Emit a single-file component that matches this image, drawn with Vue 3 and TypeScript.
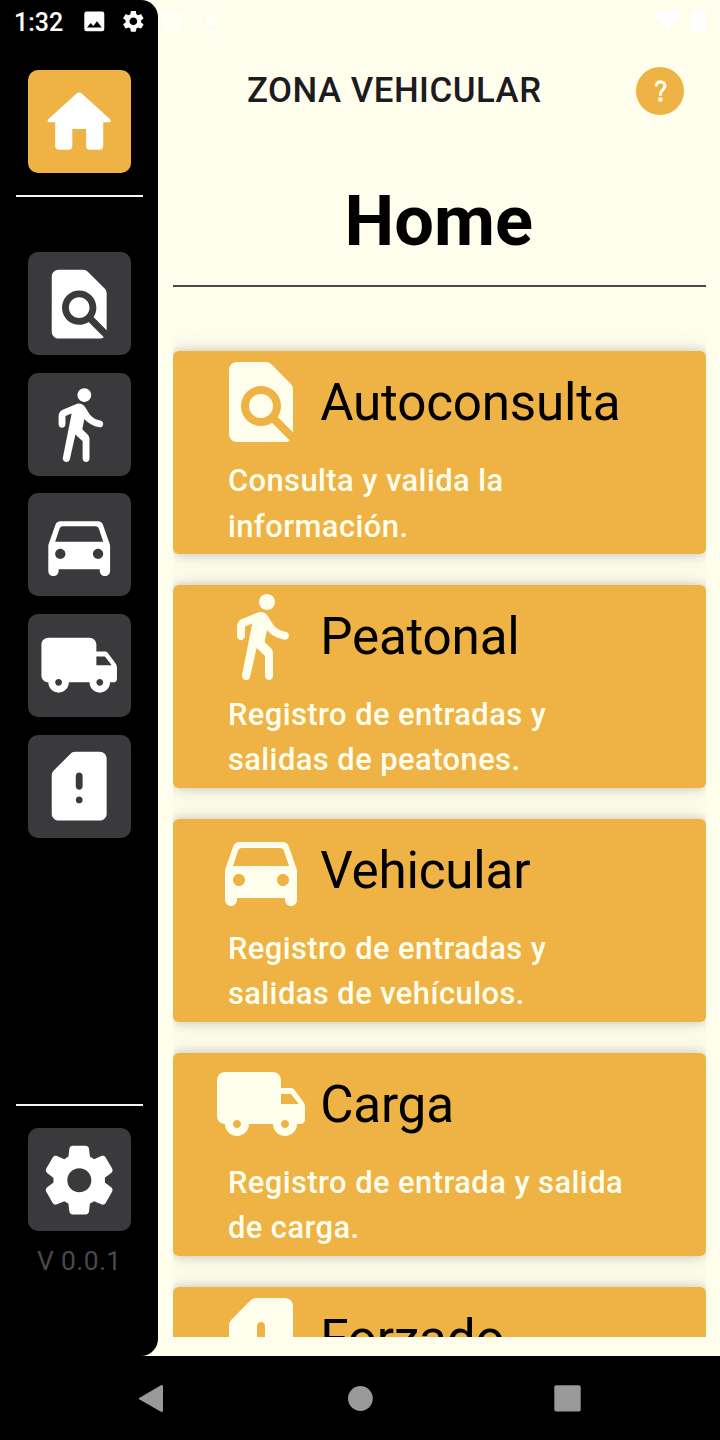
<script setup lang="ts">
interface Entry {
  icon: string
  title: string
  text: string
}

const icons: Record<string, string> = {
  home: 'M10 19v-5h4v5c0 .55.45 1 1 1h3c.55 0 1-.45 1-1v-7h1.7c.46 0 .68-.57.33-.87L12.67 3.6c-.38-.34-.96-.34-1.34 0l-8.36 7.53c-.34.3-.13.87.33.87H5v7c0 .55.45 1 1 1h3c.55 0 1-.45 1-1z',
  search: 'M20 19.59V8.83c0-.53-.21-1.04-.59-1.41l-4.83-4.83c-.37-.38-.88-.59-1.41-.59H6c-1.1 0-1.99.9-1.99 2L4 20c0 1.1.89 2 1.99 2H18c.45 0 .85-.15 1.19-.4l-4.43-4.43c-.8.52-1.74.83-2.76.83-2.76 0-5-2.24-5-5s2.24-5 5-5 5 2.24 5 5c0 1.02-.31 1.96-.83 2.75L20 19.59zM9 13c0 1.66 1.34 3 3 3s3-1.34 3-3-1.34-3-3-3-3 1.34-3 3z',
  walk: 'M13.5 5.5c1.1 0 2-.9 2-2s-.9-2-2-2-2 .9-2 2 .9 2 2 2zM9.8 8.9L7.24 21.81c-.13.61.35 1.19.98 1.19h.08c.47 0 .87-.32.98-.78L10.9 15l2.1 2v5c0 .55.45 1 1 1s1-.45 1-1v-5.64c0-.55-.22-1.07-.62-1.45L12.9 13.5l.6-3c1.07 1.24 2.62 2.13 4.36 2.41.6.09 1.14-.39 1.14-1 0-.49-.36-.9-.84-.98-1.53-.25-2.8-1.16-3.46-2.33l-1-1.6c-.56-.89-1.68-1.25-2.66-.84L7.22 7.78C6.48 8.1 6 8.82 6 9.63V12c0 .55.45 1 1 1s1-.45 1-1V9.6l1.8-.7z',
  car: 'M18.92 6.01C18.72 5.42 18.16 5 17.5 5h-11c-.66 0-1.21.42-1.42 1.01l-1.97 5.67c-.07.21-.11.43-.11.66v7.16c0 .83.67 1.5 1.5 1.5S6 20.33 6 19.5V19h12v.5c0 .82.67 1.5 1.5 1.5.82 0 1.5-.67 1.5-1.5v-7.16c0-.22-.04-.45-.11-.66l-1.97-5.67zM6.5 16c-.83 0-1.5-.67-1.5-1.5S5.67 13 6.5 13s1.5.67 1.5 1.5S7.33 16 6.5 16zm11 0c-.83 0-1.5-.67-1.5-1.5s.67-1.5 1.5-1.5 1.5.67 1.5 1.5-.67 1.5-1.5 1.5zM5 11l1.27-3.82c.14-.4.52-.68.95-.68h9.56c.43 0 .81.28.95.68L19 11H5z',
  truck: 'M19.5 8H17V6c0-1.1-.9-2-2-2H3c-1.1 0-2 .9-2 2v9c0 1.1.9 2 2 2 0 1.66 1.34 3 3 3s3-1.34 3-3h6c0 1.66 1.34 3 3 3s3-1.34 3-3h1c.55 0 1-.45 1-1v-3.33c0-.43-.14-.85-.4-1.2L20.3 8.4c-.19-.25-.49-.4-.8-.4zM6 18c-.55 0-1-.45-1-1s.45-1 1-1 1 .45 1 1-.45 1-1 1zm13.5-8.5l1.96 2.5H17V9.5h2.5zM18 18c-.55 0-1-.45-1-1s.45-1 1-1 1 .45 1 1-.45 1-1 1z',
  alert: 'M18 2h-7.17c-.53 0-1.04.21-1.42.59L4.59 7.42C4.21 7.79 4 8.3 4 8.83V20c0 1.1.9 2 2 2h12c1.1 0 2-.9 2-2V4c0-1.1-.9-2-2-2zm-6 15c-.55 0-1-.45-1-1s.45-1 1-1 1 .45 1 1-.45 1-1 1zm0-4c-.55 0-1-.45-1-1V9c0-.55.45-1 1-1s1 .45 1 1v3c0 .55-.45 1-1 1z',
  settings: 'M19.5 12c0-.23-.01-.45-.03-.68l1.86-1.41c.4-.3.51-.86.26-1.3l-1.87-3.23c-.25-.44-.79-.62-1.25-.42l-2.15.91c-.37-.26-.76-.49-1.17-.68l-.29-2.31C14.8 2.38 14.37 2 13.87 2h-3.73c-.51 0-.94.38-1 .88l-.29 2.31c-.41.19-.8.42-1.17.68l-2.15-.91c-.46-.2-1-.02-1.25.42L2.41 8.62c-.25.44-.14.99.26 1.3l1.86 1.41C4.51 11.55 4.5 11.77 4.5 12s.01.45.03.68l-1.86 1.41c-.4.3-.51.86-.26 1.3l1.87 3.23c.25.44.79.62 1.25.42l2.15-.91c.37.26.76.49 1.17.68l.29 2.31c.06.5.49.88.99.88h3.73c.5 0 .93-.38.99-.88l.29-2.31c.41-.19.8-.42 1.17-.68l2.15.91c.46.2 1 .02 1.25-.42l1.87-3.23c.25-.44.14-.99-.26-1.3l-1.86-1.41C19.49 12.45 19.5 12.23 19.5 12zM12.04 15.5c-1.93 0-3.5-1.57-3.5-3.5s1.57-3.5 3.5-3.5 3.5 1.57 3.5 3.5S13.97 15.5 12.04 15.5z',
}

const shortcuts: string[] = ['search', 'walk', 'car', 'truck', 'alert']

const entries: Entry[] = [
  { icon: 'search', title: 'Autoconsulta', text: 'Consulta y valida la información.' },
  { icon: 'walk', title: 'Peatonal', text: 'Registro de entradas y salidas de peatones.' },
  { icon: 'car', title: 'Vehicular', text: 'Registro de entradas y salidas de vehículos.' },
  { icon: 'truck', title: 'Carga', text: 'Registro de entrada y salida de carga.' },
  { icon: 'alert', title: 'Forzado', text: '' },
]
</script>

<template>
  <div class="phone">
    <div class="screen">
      <aside class="rail">
        <button class="tile active"><svg viewBox="0 0 24 24"><path :d="icons.home" /></svg></button>
        <hr class="rule" />
        <nav class="shortcuts">
          <button v-for="name in shortcuts" :key="name" class="tile">
            <svg viewBox="0 0 24 24"><path :d="icons[name]" /></svg>
          </button>
        </nav>
        <hr class="rule bottom" />
        <button class="tile"><svg viewBox="0 0 24 24"><path :d="icons.settings" /></svg></button>
        <span class="version">V 0.0.1</span>
      </aside>
      <main class="content">
        <header class="appbar">
          <span class="zone">ZONA VEHICULAR</span>
          <button class="help">
            <svg viewBox="0 0 48 48">
              <path d="M20.3 18.2C20.9 16 22.5 14.9 24.5 14.9C27.1 14.9 28.9 16.5 28.9 18.9C28.9 22.4 24.4 23.2 24.4 27.4" fill="none" stroke="#fffeec" stroke-width="3.1" stroke-linecap="round" />
              <circle cx="24.4" cy="32.6" r="2.4" fill="#fffeec" />
            </svg>
          </button>
        </header>
        <h1 class="heading">Home</h1>
        <hr class="divider" />
        <section class="list">
          <article v-for="entry in entries" :key="entry.title" class="card">
            <div class="card-head">
              <svg viewBox="0 0 24 24"><path :d="icons[entry.icon]" /></svg>
              <h2>{{ entry.title }}</h2>
            </div>
            <p>{{ entry.text }}</p>
          </article>
        </section>
      </main>
    </div>
    <div class="sysnav">
      <svg viewBox="0 0 720 84">
        <path d="M139.2 41.9L161 29.3Q163 28.6 163 30.4V54.6Q163 56.4 161 55.7L139.2 43.3Q138 42.6 139.2 41.9Z" />
        <circle cx="360.4" cy="42.5" r="12.4" />
        <rect x="554.3" y="29.2" width="26.4" height="26.4" rx="2" />
      </svg>
    </div>
    <div class="status">
      <span class="time">1:32</span>
      <svg class="status-icons" viewBox="0 0 720 44">
        <path fill-rule="evenodd" d="M86.5 11.5h15.6a2.2 2.2 0 0 1 2.2 2.2v15.4a2.2 2.2 0 0 1-2.2 2.2H86.5a2.2 2.2 0 0 1-2.2-2.2V13.7a2.2 2.2 0 0 1 2.2-2.2zM87 27.6h14.8l-4.8-6.3-3.7 4.7-2.6-3.1z" />
        <g transform="translate(120.4 8.4) scale(1.08)">
          <path d="M19.14 12.94c.04-.3.06-.61.06-.94 0-.32-.02-.64-.07-.94l2.03-1.58c.18-.14.23-.41.12-.61l-1.92-3.32c-.12-.22-.37-.29-.59-.22l-2.39.96c-.5-.38-1.03-.7-1.62-.94l-.36-2.54c-.04-.24-.24-.41-.48-.41h-3.84c-.24 0-.43.17-.47.41l-.36 2.54c-.59.24-1.13.57-1.62.94l-2.39-.96c-.22-.08-.47 0-.59.22L2.74 8.87c-.12.21-.08.47.12.61l2.03 1.58c-.05.3-.09.63-.09.94s.02.64.07.94l-2.03 1.58c-.18.14-.23.41-.12.61l1.92 3.32c.12.22.37.29.59.22l2.39-.96c.5.38 1.03.7 1.62.94l.36 2.54c.05.24.24.41.48.41h3.84c.24 0 .44-.17.47-.41l.36-2.54c.59-.24 1.13-.56 1.62-.94l2.39.96c.22.08.47 0 .59-.22l1.92-3.32c.12-.22.07-.47-.12-.61l-2.01-1.58zM12 15.6c-1.98 0-3.6-1.62-3.6-3.6s1.62-3.6 3.6-3.6 3.6 1.62 3.6 3.6-1.62 3.6-3.6 3.6z" />
        </g>
        <rect x="162" y="12" width="20" height="19" rx="2" opacity=".5" />
        <circle cx="211.5" cy="21.5" r="10.5" fill="none" stroke="#fff" stroke-width="2" opacity=".6" />
        <circle cx="211.5" cy="21.5" r="5.5" opacity=".6" />
        <path d="M655.5 14.2Q668 5.5 680.5 14.2L668 30.5Z" />
        <path fill-rule="evenodd" d="M696 10.5v-1.5h5v1.5h3a2 2 0 0 1 2 2v17.5a2 2 0 0 1-2 2h-10a2 2 0 0 1-2-2v-17.5a2 2 0 0 1 2-2zM697.8 15.5v6.5h2v-6.5zM697.8 24.5v2.2h2v-2.2z" />
      </svg>
    </div>
  </div>
</template>

<style>
body {
  margin: 0;
  background: #000;
}
</style>

<style scoped>
.phone {
  position: relative;
  width: 720px;
  height: 1440px;
  overflow: hidden;
  background: #000;
  font-family: Roboto, "Liberation Sans", sans-serif;
}
.screen {
  display: flex;
  height: 1356px;
  background: #fffeec;
}
button {
  border: 0;
  padding: 0;
}
hr {
  border: 0;
  margin: 0;
}
svg {
  display: block;
  fill: currentColor;
}
.rail {
  box-sizing: border-box;
  width: 158.4px;
  height: 1356px;
  padding: 70.4px 0 0;
  display: flex;
  flex-direction: column;
  align-items: center;
  background: #000;
  border-radius: 0 17px 17px 0;
}
.tile {
  flex: none;
  width: 103px;
  height: 103px;
  display: grid;
  place-items: center;
  border-radius: 10px;
  background: #3a3a3d;
  color: #fff;
}
.tile.active {
  background: #eeb245;
}
.tile svg {
  width: 82.4px;
  height: 82.4px;
}
.rule {
  flex: none;
  width: 127px;
  height: 2px;
  margin: 22px 0 54.9px;
  background: #f4f4f4;
}
.shortcuts {
  display: flex;
  flex-direction: column;
  gap: 17.6px;
}
.rule.bottom {
  margin: auto 0 22.2px;
}
.version {
  height: 124.8px;
  padding-top: 13.4px;
  box-sizing: border-box;
  font-size: 26.4px;
  line-height: 32px;
  letter-spacing: 0.4px;
  color: #49484b;
}
.content {
  flex: 1;
  display: flex;
  flex-direction: column;
  min-width: 0;
  padding: 0 14.5px 19px;
}
.appbar {
  flex: none;
  height: 110px;
  margin-top: 36px;
  display: flex;
  align-items: center;
}
.zone {
  flex: 1;
  padding-left: 74px;
  margin-top: -2px;
  font-size: 34.8px;
  font-weight: 500;
  letter-spacing: 0.52px;
  color: #1c1b1f;
}
.help {
  width: 48px;
  height: 48px;
  margin-right: 21.2px;
  border-radius: 50%;
  background: #eeb245;
}
.heading {
  margin: 34.5px 1px 0 0;
  height: 80px;
  line-height: 80px;
  text-align: center;
  font-size: 70.4px;
  font-weight: 700;
  color: #000;
}
.divider {
  flex: none;
  height: 2px;
  margin-top: 24.5px;
  background: #49484a;
}
.list {
  flex: 1;
  min-height: 0;
  overflow: hidden;
  display: flex;
  flex-direction: column;
  gap: 30.9px;
  padding-top: 64px;
}
.card {
  flex: none;
  box-sizing: border-box;
  height: 203px;
  padding: 3px 39.9px 0;
  border-radius: 6px;
  background: #eeb245;
  box-shadow: 0 1px 24px 2px rgba(0, 0, 0, 0.08), 0 0 11px rgba(0, 0, 0, 0.18);
}
.card-head {
  display: flex;
  align-items: center;
  gap: 11.4px;
  height: 96px;
  color: #fffeec;
}
.card-head svg {
  width: 96px;
  height: 96px;
}
.card-head h2 {
  margin: 0;
  padding-top: 1px;
  font-size: 51.2px;
  font-weight: 400;
  letter-spacing: -0.2px;
  color: #000;
}
.card p {
  margin: 8px 15.1px 0;
  font-size: 30.9px;
  line-height: 45.5px;
  font-weight: 500;
  letter-spacing: 0.44px;
  color: #fffeec;
}
.sysnav {
  height: 84px;
  color: #999;
}
.sysnav svg {
  width: 720px;
  height: 84px;
}
.status {
  position: absolute;
  inset: 0 0 auto 0;
  height: 44px;
  display: flex;
  align-items: center;
  color: #fff;
}
.status-icons {
  position: absolute;
  inset: 0;
  width: 720px;
  height: 44px;
}
.time {
  padding: 1px 0 0 14px;
  font-size: 25px;
  font-weight: 500;
}
</style>
